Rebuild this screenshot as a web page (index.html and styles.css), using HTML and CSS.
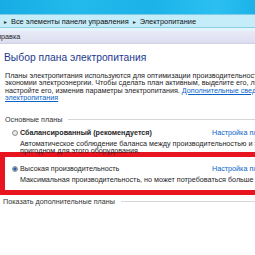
FILE: index.html
```
<!DOCTYPE html>
<html lang="ru">
<head>
  <meta charset="UTF-8">
  <title>Электропитание</title>
  <link rel="stylesheet" href="styles.css">
</head>
<body>
  <div class="titlebar"></div>
  <div class="addressbar">
    <span class="arrow">▸</span>
    <span>Все элементы панели управления</span>
    <span class="arrow">▸</span>
    <span>Электропитание</span>
  </div>
  <div class="strip"></div>
  <div class="menubar"><span>Справка</span></div>

  <div class="content">
    <h1>Выбор плана электропитания</h1>
    <p class="intro">
      Планы электропитания используются для оптимизации производительности компьютера или<br>
      экономии электроэнергии. Чтобы сделать план активным, выделите его, либо выберите план и<br>
      настройте его, изменив параметры электропитания. <a href="#">Дополнительные сведения о планах</a><br>
      <a href="#">электропитания</a>
    </p>

    <div class="group"><span>Основные планы</span></div>

    <div class="plan">
      <div class="plan-head">
        <span class="radio"></span>
        <span class="name bold">Сбалансированный (рекомендуется)</span>
        <a href="#">Настройка плана</a>
      </div>
      <div class="plan-desc">
        Автоматическое соблюдение баланса между производительностью и энергопотреблением на<br>
        пригодном для этого оборудования.
      </div>
    </div>

    <div class="plan selected">
      <div class="plan-head">
        <span class="radio on"></span>
        <span class="name">Высокая производительность</span>
        <a href="#">Настройка плана</a>
      </div>
      <div class="plan-desc">
        Максимальная производительность, но может потребоваться больше энергии.
      </div>
    </div>

    <div class="group more"><span>Показать дополнительные планы</span></div>
  </div>
</body>
</html>
```
FILE: styles.css
```
body { margin: 0; width: 255px; height: 255px; overflow: hidden; background: #fff;
  font-family: "Liberation Sans", Arial, sans-serif; font-size: 7.2px; color: #1e1e1e; }
a { color: #0a64c8; }

.titlebar { height: 14px;
  background: linear-gradient(90deg, #17ade4 0%, #22b9ec 30%, #1bb3e8 60%, #2cc0f1 85%, #1ab2e8 100%); }
.addressbar { height: 12px; display: flex; align-items: center; gap: 4px; padding-left: 4px;
  background: #c4ecf9; border-top: 1px solid #7fcbe6; border-bottom: 1px solid #8ccde4;
  white-space: nowrap; font-size: 7.4px; color: #111; }
.arrow { font-size: 6px; color: #333; }
.strip { height: 3px; background: #e4f4fb; }
.menubar { height: 12px; line-height: 12px; background: linear-gradient(#e9eaf6, #dcdef0);
  border-bottom: 1px solid #cfd1e4; overflow: hidden; }
.menubar span { display: block; text-indent: -8px; }

.content { padding: 8px 0 0 0; width: 400px; }
h1 { margin: 0 0 0 4px; font-size: 10.3px; font-weight: normal; line-height: 12px; color: #1d3790; }
.intro { margin: 8px 0 0 5px; line-height: 7.4px; white-space: nowrap; }

.group { display: flex; align-items: center; gap: 6px; margin: 13px 0 0 5px; color: #333; }
.group::after { content: ""; flex: 1; border-top: 1px solid #d6d6d6; }

.plan { padding: 5px 0 0 12px; }
.plan-head { display: grid; grid-template-columns: 8px 192px auto; align-items: center; line-height: 8px; }
.plan-desc { padding-left: 8px; margin-top: 3px; line-height: 7.4px; white-space: nowrap; }
.bold { font-weight: bold; }
.plan-head a { text-decoration: none; }
.radio { width: 4px; height: 4px; border: 1px solid #8f8f8f; border-radius: 50%;
  background: radial-gradient(#f4f4f4, #d8d8d8); }
.radio.on { background: radial-gradient(#2a5fa8 0 1px, #8fb4dc 2px, #e6eef8 3px); }

.plan.selected { margin-top: -2px; padding: 8px 0 6px 7px; border: 5px solid #e8141f; border-right: 0; }

.more { margin: 2px 0 0 3px; }
```
